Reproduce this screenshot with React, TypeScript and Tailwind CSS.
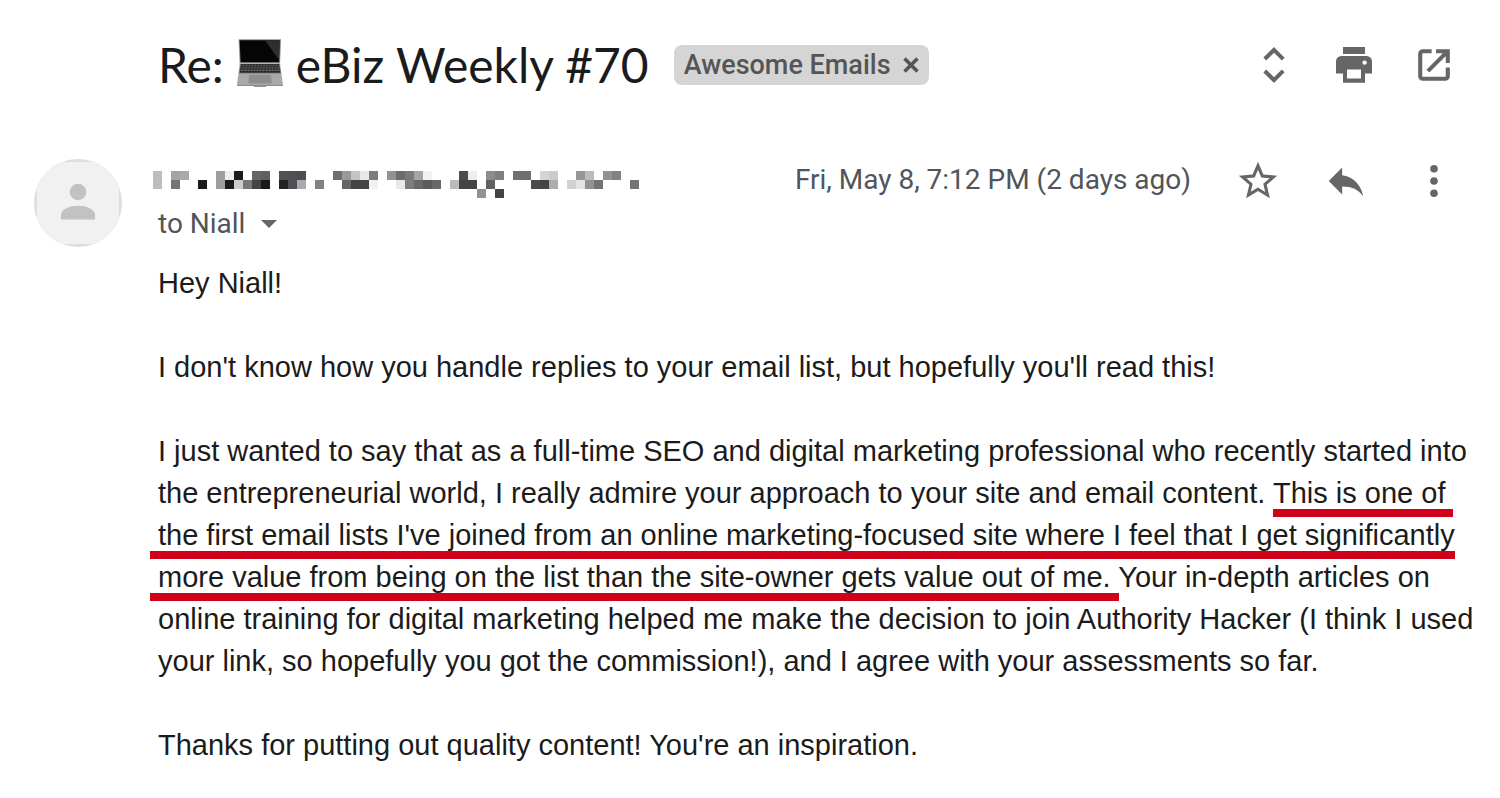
import React from "react";

type Cell = [col: number, row: number, color: string];

// pixelated sender name, one entry per 9px block
const senderCells: Cell[] = [
  [0, 0, "#bdbdbd"], [0, 1, "#bdbdbd"], [2, 0, "#a4a4a4"], [3, 0, "#a9a9a9"], [2, 1, "#757575"],
  [5, 1, "#1a1b1c"], [7, 0, "#9e9e9e"], [7, 1, "#9e9e9e"], [8, 0, "#eeeeee"], [8, 1, "#1a1b1c"],
  [9, 0, "#1a1b1c"], [9, 1, "#cccccc"], [10, 1, "#777777"], [11, 0, "#666668"], [11, 1, "#444446"],
  [12, 0, "#5f6062"], [12, 1, "#1a1a1b"], [14, 0, "#515254"], [14, 1, "#222223"], [15, 0, "#4f5053"],
  [15, 1, "#4f5053"], [16, 0, "#4d4e50"], [16, 1, "#aaaaac"], [18, 1, "#828282"], [20, 0, "#6f6f6f"],
  [21, 0, "#999999"], [21, 1, "#666666"], [22, 0, "#c4c4c4"], [22, 1, "#444444"], [23, 0, "#e8e8e8"],
  [23, 1, "#444444"], [24, 0, "#7c7c7c"], [24, 1, "#f0f0f0"], [26, 0, "#929292"], [27, 0, "#6d6d6d"],
  [27, 1, "#e8e8e8"], [28, 0, "#7a7a7a"], [28, 1, "#7c7c7c"], [29, 0, "#a4a4a4"], [29, 1, "#686868"],
  [30, 0, "#f2f2f2"], [30, 1, "#5a5a5a"], [31, 1, "#686868"], [33, 1, "#bbbbbb"], [34, 0, "#4c4c4c"],
  [34, 1, "#444444"], [35, 0, "#eeeeee"], [35, 1, "#444444"], [36, 2, "#929292"], [37, 0, "#8c8c8c"],
  [37, 1, "#606060"], [38, 0, "#808080"], [38, 2, "#444444"], [40, 0, "#6f6f6f"], [41, 0, "#6f6f6f"],
  [42, 1, "#4a4a4a"], [43, 0, "#d5d5d5"], [43, 1, "#444444"], [44, 0, "#cccccc"], [44, 1, "#adadad"],
  [46, 1, "#d0d2d0"], [47, 0, "#969696"], [47, 1, "#e4e4e4"], [48, 0, "#bbbbbb"], [48, 1, "#929292"],
  [49, 1, "#727272"], [50, 0, "#929292"], [51, 0, "#828282"], [53, 1, "#737373"],
];

function Laptop() {
  return (
    <svg viewBox="260 42 142 146" className="mx-3 inline-block h-12 w-12 align-[-4px]" role="img" aria-label="laptop">
      <path d="M266 43h129l-3 73H269z" fill="#8f8f8f" />
      <path d="M269 46h122l-2 67H272z" fill="#050505" />
      <path d="M346 46h45l-2 60z" fill="#2e2e2e" />
      <path d="M269 116h123l9 66-2 3h-48l-3 2h-34l-3-2h-48l-2-3z" fill="#a9a9a9" />
      <path d="M272 118h118l4 28H268z" fill="#4a4a4a" />
      <path d="M271 123.500h119M270 130h121M269 136.500h123" stroke="#8d8d8d" strokeWidth="1.500" />
      <path d="M273 120.500h116M272 127h118M271 133.500h120M270 141.500h122" stroke="#202020" strokeWidth="4" strokeDasharray="7 2" />
      <path d="M298 151h67l2 26h-71z" fill="#8e8e8e" />
      <path d="M261 182h140l-2 3h-48l-3 2h-34l-3-2h-48z" fill="#8b8b8b" />
    </svg>
  );
}

function IconButton({ label, children }: { label: string; children: React.ReactNode }) {
  return (
    <button type="button" aria-label={label} className="flex size-12 shrink-0 items-center justify-center text-[#666666]">
      {children}
    </button>
  );
}

function Header() {
  return (
    <header className="flex h-[66px] items-center pl-[158px] pr-[42px]">
      <h1 className="whitespace-nowrap font-[Lato,sans-serif] text-[48px] leading-[66px] text-[#1a1b1d]">
        Re:
        <Laptop />
        eBiz Weekly #70
      </h1>
      <div className="ml-[25px] flex h-10 items-center gap-3 whitespace-nowrap rounded-lg bg-[#d5d5d5] px-2.5 text-[27px] font-medium leading-10 text-[#555555]">
        <span>Awesome Emails</span>
        <button type="button" aria-label="Remove label">
          <svg viewBox="0 0 16 16" className="size-4" fill="none" stroke="currentColor" strokeWidth="3.6">
            <path d="M1.500 1.500l13 13M14.500 1.500l-13 13" />
          </svg>
        </button>
      </div>
      <div className="ml-auto flex gap-8">
        <IconButton label="Expand all">
          <svg viewBox="0 0 24 24" className="size-12" fill="currentColor">
            <path d="M12 5.830l3.900 3.900 1.400-1.400L12 3 6.700 8.300l1.400 1.400z" />
            <path d="M12 18.170l3.900-3.900 1.400 1.400L12 21l-5.300-5.300 1.400-1.400z" />
          </svg>
        </IconButton>
        <IconButton label="Print all">
          <svg viewBox="0 0 24 24" className="size-12" fill="currentColor">
            <path d="M6.500 3h11v3.500h-11z" />
            <path
              fillRule="evenodd"
              d="M5.700 7.500h12.600A2.700 2.700 0 0 1 21 10.200v6.100h-3.500v4.600h-11v-4.600H3v-6.100a2.700 2.700 0 0 1 2.700-2.700zM8.500 14.200v4.500h7v-4.500zM17.300 9.700a1.100 1.100 0 1 0 0 2.200 1.100 1.100 0 0 0 0-2.200z"
            />
          </svg>
        </IconButton>
        <IconButton label="In new window">
          <svg viewBox="0 0 94 94" className="size-8" fill="none" stroke="currentColor" strokeWidth="12">
            <path d="M40 6.500H14a7.500 7.500 0 0 0-7.500 7.500v66a7.500 7.500 0 0 0 7.500 7.500h66a7.500 7.500 0 0 0 7.500-7.500V54" />
            <path d="M53 6.500h34.500V41M29 65l56-56" />
          </svg>
        </IconButton>
      </div>
    </header>
  );
}

function Avatar() {
  return (
    <div className="size-[88px] shrink-0 overflow-hidden rounded-full bg-[#dedede] p-[3px]">
      <svg viewBox="0 0 82 82" className="h-full w-full rounded-sm bg-[#f1f1f1]" fill="#c2c2c2">
        <circle cx="41" cy="30" r="8.300" />
        <path d="M24 57.500v-4.500c0-6 9-9.300 17-9.300s17 3.300 17 9.300v4.500z" />
      </svg>
    </div>
  );
}

function SenderName() {
  return (
    <svg viewBox="0 0 486 27" className="-ml-[5px] mt-3 h-[27px] w-[486px]" shapeRendering="crispEdges" role="img" aria-label="Sender">
      {senderCells.map(([col, row, color]) => (
        <rect key={`${col}-${row}`} x={col * 9} y={row * 9} width="9" height="9" fill={color} />
      ))}
    </svg>
  );
}

function MessageInfo() {
  return (
    <section className="mt-[61px] flex gap-9 pl-[34px] pr-[42px] text-[28px] text-[#50555b]">
      <Avatar />
      <div className="flex-1">
        <div className="flex h-11 items-start">
          <SenderName />
          <time className="ml-auto mr-[43px] whitespace-nowrap leading-[42px]">Fri, May 8, 7:12 PM (2 days ago)</time>
          <div className="flex h-11 items-center gap-10">
            <IconButton label="Star">
              <svg viewBox="0 0 24 24" className="size-[46px]" fill="currentColor">
                <path d="M22 9.240l-7.190-.62L12 2 9.190 8.630 2 9.240l5.460 4.730L5.820 21 12 17.270 18.180 21l-1.630-7.030L22 9.240zM12 15.400l-3.760 2.270 1-4.280-3.320-2.880 4.380-.38L12 6.100l1.710 4.040 4.380.38-3.320 2.880 1 4.280L12 15.400z" />
              </svg>
            </IconButton>
            <IconButton label="Reply">
              <svg viewBox="0 0 24 24" className="size-[46px]" fill="currentColor">
                <path d="M10 9V5l-7 7 7 7v-4.100c5 0 8.500 1.600 11 5.100-1-5-4-10-11-11z" />
              </svg>
            </IconButton>
            <IconButton label="More">
              <svg viewBox="0 0 24 24" className="size-12" fill="currentColor">
                <circle cx="12" cy="5.900" r="1.900" />
                <circle cx="12" cy="12" r="1.900" />
                <circle cx="12" cy="18.100" r="1.900" />
              </svg>
            </IconButton>
          </div>
        </div>
        <button type="button" aria-label="Show details" className="flex h-11 items-center gap-4 pb-0.5 leading-10">
          <span>to Niall</span>
          <svg viewBox="0 0 16 8" className="h-2 w-4" fill="#666666">
            <path d="M0 0h16L8 8z" />
          </svg>
        </button>
      </div>
    </section>
  );
}

function Message() {
  return (
    <article className="mt-[15px] flex flex-col gap-[42px] pb-8 pl-[158px] pr-5 font-['Liberation_Sans',Arial,sans-serif] text-[29px] leading-[42px] text-[#1b1b1b]">
      <p>Hey Niall!</p>
      <p>I don't know how you handle replies to your email list, but hopefully you'll read this!</p>
      <p>
        I just wanted to say that as a full-time SEO and digital marketing professional who recently started into the
        entrepreneurial world, I really admire your approach to your site and email content.{" "}
        <span className="-mr-2 border-b-8 border-[#d0021b] pr-2">This is one of</span>{" "}
        <span className="-ml-2 border-b-8 border-[#d0021b] pl-2">
          the first email lists I've joined from an online marketing-focused site where I feel that I get significantly
        </span>{" "}
        <span className="-mx-2 border-b-8 border-[#d0021b] px-2">
          more value from being on the list than the site-owner gets value out of me.
        </span>{" "}
        Your in-depth articles on online training for digital marketing helped me make the decision to join Authority
        Hacker (I think I used your link, so hopefully you got the commission!), and I agree with your assessments so
        far.
      </p>
      <p>Thanks for putting out quality content! You're an inspiration.</p>
    </article>
  );
}

export default function App() {
  return (
    <main className="min-h-screen bg-white pt-8 font-[Roboto,sans-serif]">
      <Header />
      <MessageInfo />
      <Message />
    </main>
  );
}
